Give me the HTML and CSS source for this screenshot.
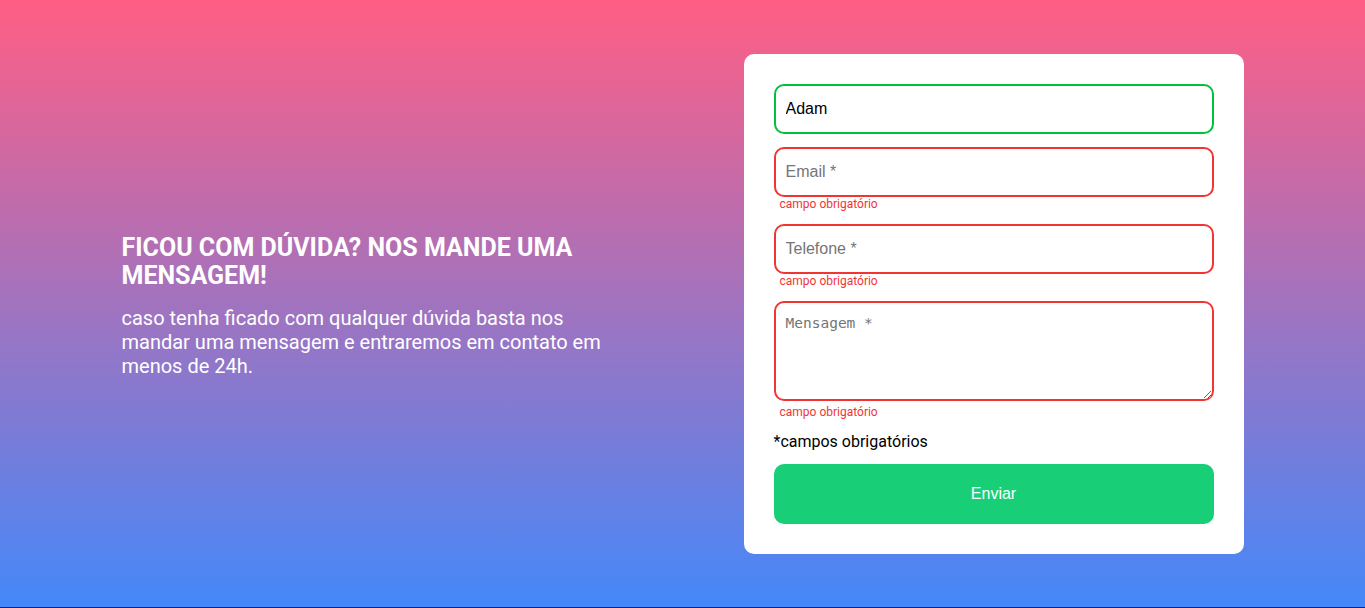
FILE: index.html
```html
<!DOCTYPE html>
<html lang="pt-BR">
<head>
<meta charset="utf-8">
<title>Contato</title>
<link rel="stylesheet" href="styles.css">
</head>
<body>
<main class="page">
  <div class="container">
    <section class="intro">
      <h1 class="intro-title">FICOU COM DÚVIDA? NOS MANDE UMA MENSAGEM!</h1>
      <p class="intro-text">caso tenha ficado com qualquer dúvida basta nos mandar uma mensagem e entraremos em contato em menos de 24h.</p>
    </section>
    <form class="card" onsubmit="return false">
      <div class="field">
        <input class="input input-valid" type="text" value="Adam" placeholder="Nome *">
      </div>
      <div class="field">
        <input class="input input-error" type="email" placeholder="Email *">
        <span class="error">campo obrigatório</span>
      </div>
      <div class="field">
        <input class="input input-error" type="tel" placeholder="Telefone *">
        <span class="error">campo obrigatório</span>
      </div>
      <div class="field">
        <textarea class="input textarea input-error" placeholder="Mensagem *"></textarea>
        <span class="error">campo obrigatório</span>
      </div>
      <p class="note">*campos obrigatórios</p>
      <button class="submit" type="submit">Enviar</button>
    </form>
  </div>
</main>
</body>
</html>
```
FILE: styles.css
```css
* {
  box-sizing: border-box;
}

html, body {
  margin: 0;
  padding: 0;
}

body {
  font-family: Roboto, "Liberation Sans", sans-serif;
  background: #1b2233;
}

.page {
  height: 607px;
  background: linear-gradient(180deg, #ff5e84 0%, #4488f9 100%);
  display: flex;
  align-items: center;
}

.container {
  width: 1122px;
  margin: 0 auto;
  display: flex;
  align-items: center;
  justify-content: space-between;
}

.intro {
  width: 500px;
  padding-top: 4px;
  color: #ffffff;
}

.intro-title {
  margin: 0 0 16px;
  font-size: 25px;
  line-height: 28px;
  font-weight: 700;
}

.intro-text {
  margin: 0;
  font-size: 20px;
  line-height: 24px;
  font-weight: 400;
}

.card {
  width: 500px;
  background: #ffffff;
  border-radius: 10px;
  padding: 30px;
  display: flex;
  flex-direction: column;
}

.field {
  display: flex;
  flex-direction: column;
  margin-bottom: 13px;
}

.input {
  width: 100%;
  height: 50px;
  border: 2px solid #cccccc;
  border-radius: 10px;
  padding: 0 10px;
  font-family: "Liberation Sans", Arial, sans-serif;
  font-size: 16px;
  color: #000000;
  background: #ffffff;
  outline: none;
}

.input::placeholder {
  color: #757575;
}

.input-valid {
  border-color: #00c03c;
}

.input-error {
  border-color: #f23434;
}

.textarea {
  height: 100px;
  margin-bottom: 4px;
  padding: 12px 10px;
  font-family: "DejaVu Sans Mono", monospace;
  font-size: 14.5px;
  line-height: 17px;
  resize: vertical;
}

.error {
  display: block;
  padding-left: 6px;
  font-size: 12px;
  line-height: 14px;
  color: #f23434;
}

.note {
  margin: 0 0 13px;
  font-size: 16px;
  line-height: 19px;
  color: #000000;
}

.submit {
  height: 60px;
  border: none;
  border-radius: 10px;
  background: #18cf78;
  color: #ffffff;
  font-family: "Liberation Sans", Arial, sans-serif;
  font-size: 16px;
  cursor: pointer;
}
```
